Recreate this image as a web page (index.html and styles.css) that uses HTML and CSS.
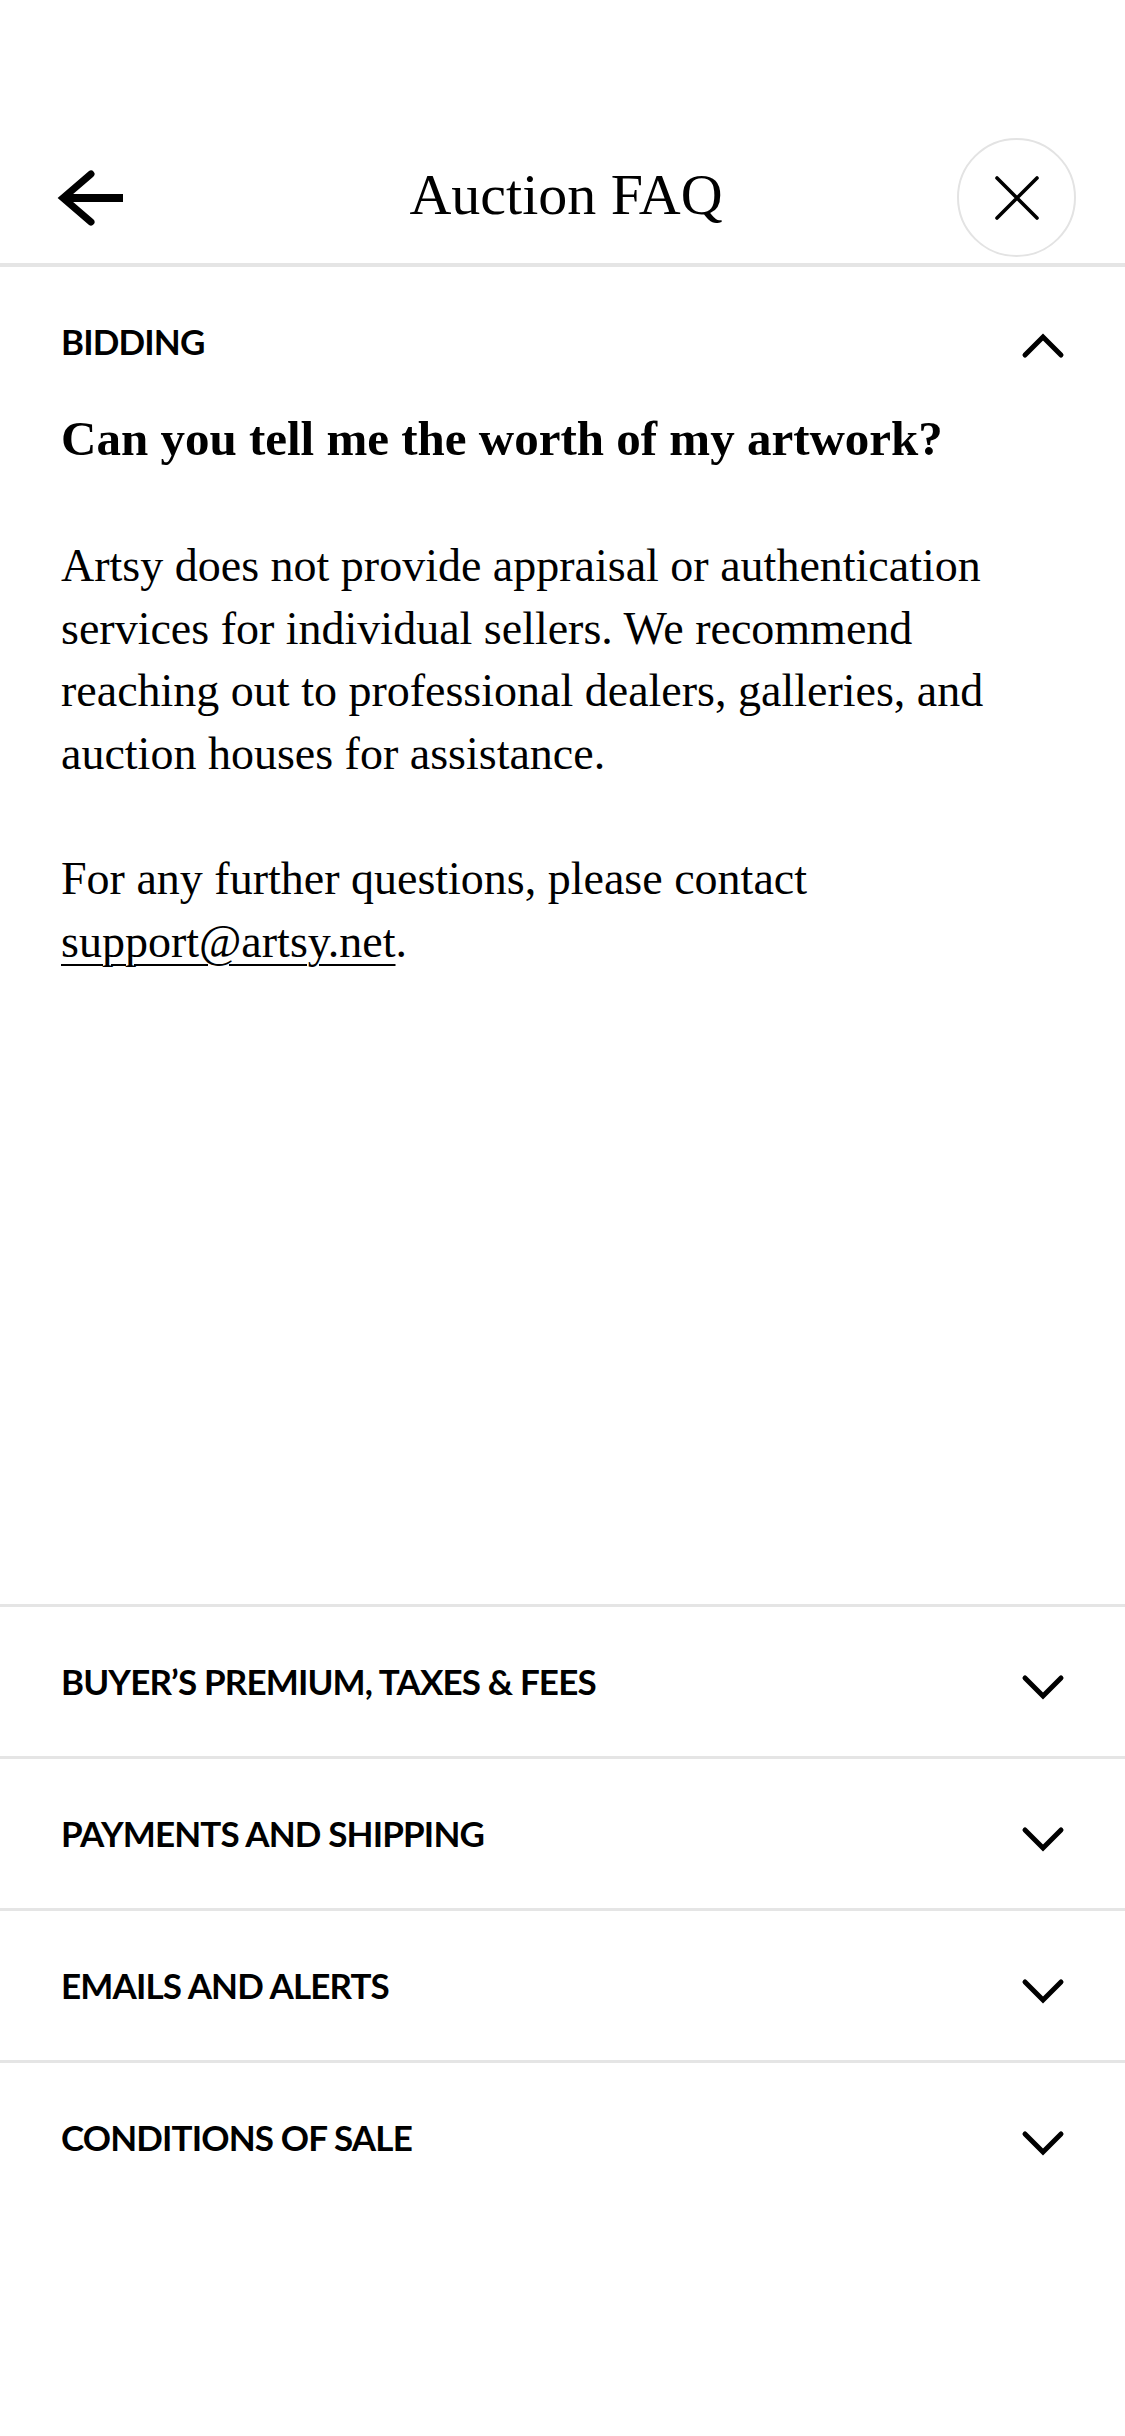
FILE: index.html
```html
<!DOCTYPE html>
<html lang="en">
<head>
<meta charset="utf-8">
<title>Auction FAQ</title>
<link rel="stylesheet" href="styles.css">
</head>
<body>
<div class="page">
  <header class="header">
    <button class="back" aria-label="Back">
      <svg width="68" height="56" viewBox="0 0 68 56"><path d="M34 4 L6 28 L34 52" fill="none" stroke="#000" stroke-width="7" stroke-linecap="round" stroke-linejoin="miter"/><path d="M8 28 H66" stroke="#000" stroke-width="8"/></svg>
    </button>
    <h1 class="title">Auction FAQ</h1>
    <div class="right">
      <button class="close" aria-label="Close">
        <svg width="44" height="44" viewBox="0 0 44 44"><path d="M2 2 L42 42 M42 2 L2 42" stroke="#000" stroke-width="3.6" stroke-linecap="round"/></svg>
      </button>
    </div>
  </header>

  <section class="section open">
    <div class="section-head">
      <span class="section-title">BIDDING</span>
      <svg class="chev" width="44" height="26" viewBox="0 0 44 26"><path d="M4 22 L22 4 L40 22" fill="none" stroke="#000" stroke-width="5" stroke-linecap="round"/></svg>
    </div>
    <div class="answer">
      <h2 class="question">Can you tell me the worth of my artwork?</h2>
      <p class="para">Artsy does not provide appraisal or authentication services for individual sellers. We recommend reaching out to professional dealers, galleries, and auction houses for assistance.</p>
      <p class="para">For any further questions, please contact <a class="link" href="#">support@artsy.net</a>.</p>
    </div>
  </section>

  <section class="section">
    <div class="section-head">
      <span class="section-title">BUYER’S PREMIUM, TAXES &amp; FEES</span>
      <svg class="chev" width="44" height="26" viewBox="0 0 44 26"><path d="M4 4 L22 22 L40 4" fill="none" stroke="#000" stroke-width="5" stroke-linecap="round"/></svg>
    </div>
  </section>
  <section class="section">
    <div class="section-head">
      <span class="section-title">PAYMENTS AND SHIPPING</span>
      <svg class="chev" width="44" height="26" viewBox="0 0 44 26"><path d="M4 4 L22 22 L40 4" fill="none" stroke="#000" stroke-width="5" stroke-linecap="round"/></svg>
    </div>
  </section>
  <section class="section">
    <div class="section-head">
      <span class="section-title">EMAILS AND ALERTS</span>
      <svg class="chev" width="44" height="26" viewBox="0 0 44 26"><path d="M4 4 L22 22 L40 4" fill="none" stroke="#000" stroke-width="5" stroke-linecap="round"/></svg>
    </div>
  </section>
  <section class="section">
    <div class="section-head">
      <span class="section-title">CONDITIONS OF SALE</span>
      <svg class="chev" width="44" height="26" viewBox="0 0 44 26"><path d="M4 4 L22 22 L40 4" fill="none" stroke="#000" stroke-width="5" stroke-linecap="round"/></svg>
    </div>
  </section>
</div>
</body>
</html>
```

FILE: styles.css
```css
* { box-sizing: border-box; }
html, body { margin: 0; padding: 0; background: #fff; }
body { color: #000; font-family: "Liberation Serif", "Times New Roman", serif; }

.page {
  width: 1125px;
  height: 2436px;
  display: flex;
  flex-direction: column;
  padding-top: 132px;
  padding-bottom: 224px;
}

.header {
  height: 135px;
  flex: none;
  display: grid;
  grid-template-columns: 1fr auto 1fr;
  align-items: center;
  padding: 0 49px 0 56px;
  border-bottom: 4px solid #e5e5e5;
}
.back, .close {
  background: none;
  border: 0;
  padding: 0;
  margin: 0;
  cursor: pointer;
  display: flex;
  align-items: center;
  justify-content: center;
}
.back { justify-self: start; width: 70px; height: 60px; }
.right { justify-self: end; display: flex; }
.close {
  width: 119px;
  height: 119px;
  border-radius: 50%;
  border: 2px solid #e3e3e3;
}
.title {
  margin: 0 0 6px;
  font-weight: 400;
  font-size: 58px;
  line-height: 1;
  letter-spacing: 0;
}

.section { flex: none; border-top: 3px solid #e5e5e5; }
.section.open { flex: 1; border-top: 0; }
.section-head {
  height: 149px;
  display: flex;
  align-items: center;
  justify-content: space-between;
  padding: 0 60px 0 61px;
}
.section.open .section-head { height: 142px; padding-top: 6px; }
.section-title {
  font-family: Lato, "Noto Sans", sans-serif;
  font-weight: 700;
  font-size: 35px;
  line-height: 1;
  letter-spacing: -0.85px;
}
.chev { margin-top: 10px; }

.answer { padding: 0 61px; }
.question {
  margin: 0;
  font-size: 49px;
  line-height: 59px;
  font-weight: 700;
}
.para {
  margin: 67px 0 0;
  font-size: 46px;
  line-height: 62.5px;
}
.para + .para { margin-top: 63px; }
.link {
  color: #000;
  text-decoration: underline;
  text-decoration-thickness: 2px;
  text-underline-offset: 7px;
}
```
